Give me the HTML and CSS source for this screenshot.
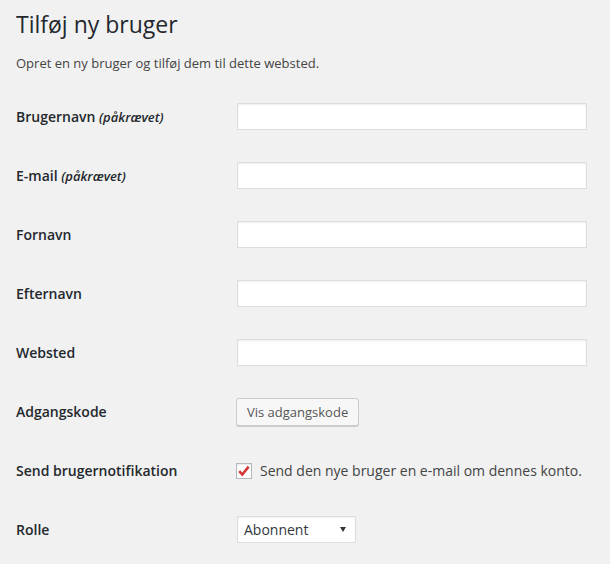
FILE: index.html
```html
<!DOCTYPE html>
<html lang="da">
<head>
<meta charset="utf-8">
<title>Tilføj ny bruger</title>
<link rel="stylesheet" href="styles.css">
</head>
<body>
<div class="wrap">
  <h1 class="title">Tilføj ny bruger</h1>
  <p class="intro">Opret en ny bruger og tilføj dem til dette websted.</p>
  <div class="form">
    <div class="row">
      <label class="label">Brugernavn <span class="req">(påkrævet)</span></label>
      <div class="field"><input class="text" type="text"></div>
    </div>
    <div class="row">
      <label class="label">E-mail <span class="req">(påkrævet)</span></label>
      <div class="field"><input class="text" type="text"></div>
    </div>
    <div class="row">
      <label class="label">Fornavn</label>
      <div class="field"><input class="text" type="text"></div>
    </div>
    <div class="row">
      <label class="label">Efternavn</label>
      <div class="field"><input class="text" type="text"></div>
    </div>
    <div class="row">
      <label class="label">Websted</label>
      <div class="field"><input class="text" type="text"></div>
    </div>
    <div class="row">
      <label class="label">Adgangskode</label>
      <div class="field"><button class="button" type="button">Vis adgangskode</button></div>
    </div>
    <div class="row">
      <label class="label">Send brugernotifikation</label>
      <div class="field">
        <span class="check">
          <svg width="14" height="14" viewBox="0 0 14 14"><path d="M2.2 7.2 L5.3 10.6 L11.6 2.6" fill="none" stroke="#d63638" stroke-width="2.6" stroke-linejoin="miter" stroke-linecap="butt"/></svg>
        </span>
        <span class="check-text">Send den nye bruger en e-mail om dennes konto.</span>
      </div>
    </div>
    <div class="row">
      <label class="label">Rolle</label>
      <div class="field">
        <div class="select"><span>Abonnent</span><span class="arrow"></span></div>
      </div>
    </div>
  </div>
</div>
</body>
</html>
```
FILE: styles.css
```css
html, body {
  margin: 0;
  padding: 0;
  background: #f1f1f1;
}
body {
  font-family: "Open Sans", "Noto Sans", sans-serif;
  color: #23282d;
  font-size: 13px;
}
.wrap {
  padding: 10px 0 0 16px;
}
.title {
  margin: 0;
  font-size: 23px;
  font-weight: 400;
  line-height: 29px;
  color: #23282d;
}
.intro {
  margin: 15px 0 0;
  font-size: 13px;
  line-height: 19.5px;
  color: #444;
}
.form {
  margin-top: 13.5px;
}
.row {
  display: flex;
  align-items: center;
  height: 59px;
}
.label {
  width: 221px;
  flex: none;
  font-size: 14px;
  font-weight: 600;
  color: #23282d;
  line-height: 20px;
}
.req {
  font-style: italic;
  font-size: 13px;
  font-weight: 600;
}
.field {
  display: flex;
  align-items: center;
}
.text {
  box-sizing: border-box;
  width: 350px;
  height: 27px;
  margin: 0;
  border: 1px solid #ddd;
  background: #fff;
  box-shadow: inset 0 1px 2px rgba(0,0,0,0.07);
  padding: 3px 5px;
  font-family: inherit;
}
.button {
  box-sizing: border-box;
  height: 28px;
  margin: 0 0 0 -1px;
  padding: 0 10px 1px;
  font-family: inherit;
  font-size: 13px;
  color: #555;
  background: #f7f7f7;
  border: 1px solid #ccc;
  border-radius: 3px;
  box-shadow: 0 1px 0 #ccc;
  line-height: 26px;
}
.check {
  box-sizing: border-box;
  width: 16px;
  height: 16px;
  margin-left: -1px;
  border: 1px solid #b4b9be;
  background: #fff;
  box-shadow: inset 0 1px 2px rgba(0,0,0,0.1);
  display: flex;
  align-items: center;
  justify-content: center;
  margin-right: 8px;
}
.check svg {
  display: block;
}
.check-text {
  font-size: 14px;
  color: #444;
  line-height: 20px;
}
.select {
  box-sizing: border-box;
  width: 119px;
  height: 27px;
  border: 1px solid #ddd;
  background: #fff;
  box-shadow: inset 0 1px 2px rgba(0,0,0,0.07);
  display: flex;
  align-items: center;
  justify-content: space-between;
  padding: 0 6px 0 6px;
  font-size: 14px;
  color: #32373c;
}
.arrow {
  width: 0;
  height: 0;
  border-left: 3px solid transparent;
  border-right: 3px solid transparent;
  border-top: 5px solid #32373c;
  margin-right: 3px;
}
```
